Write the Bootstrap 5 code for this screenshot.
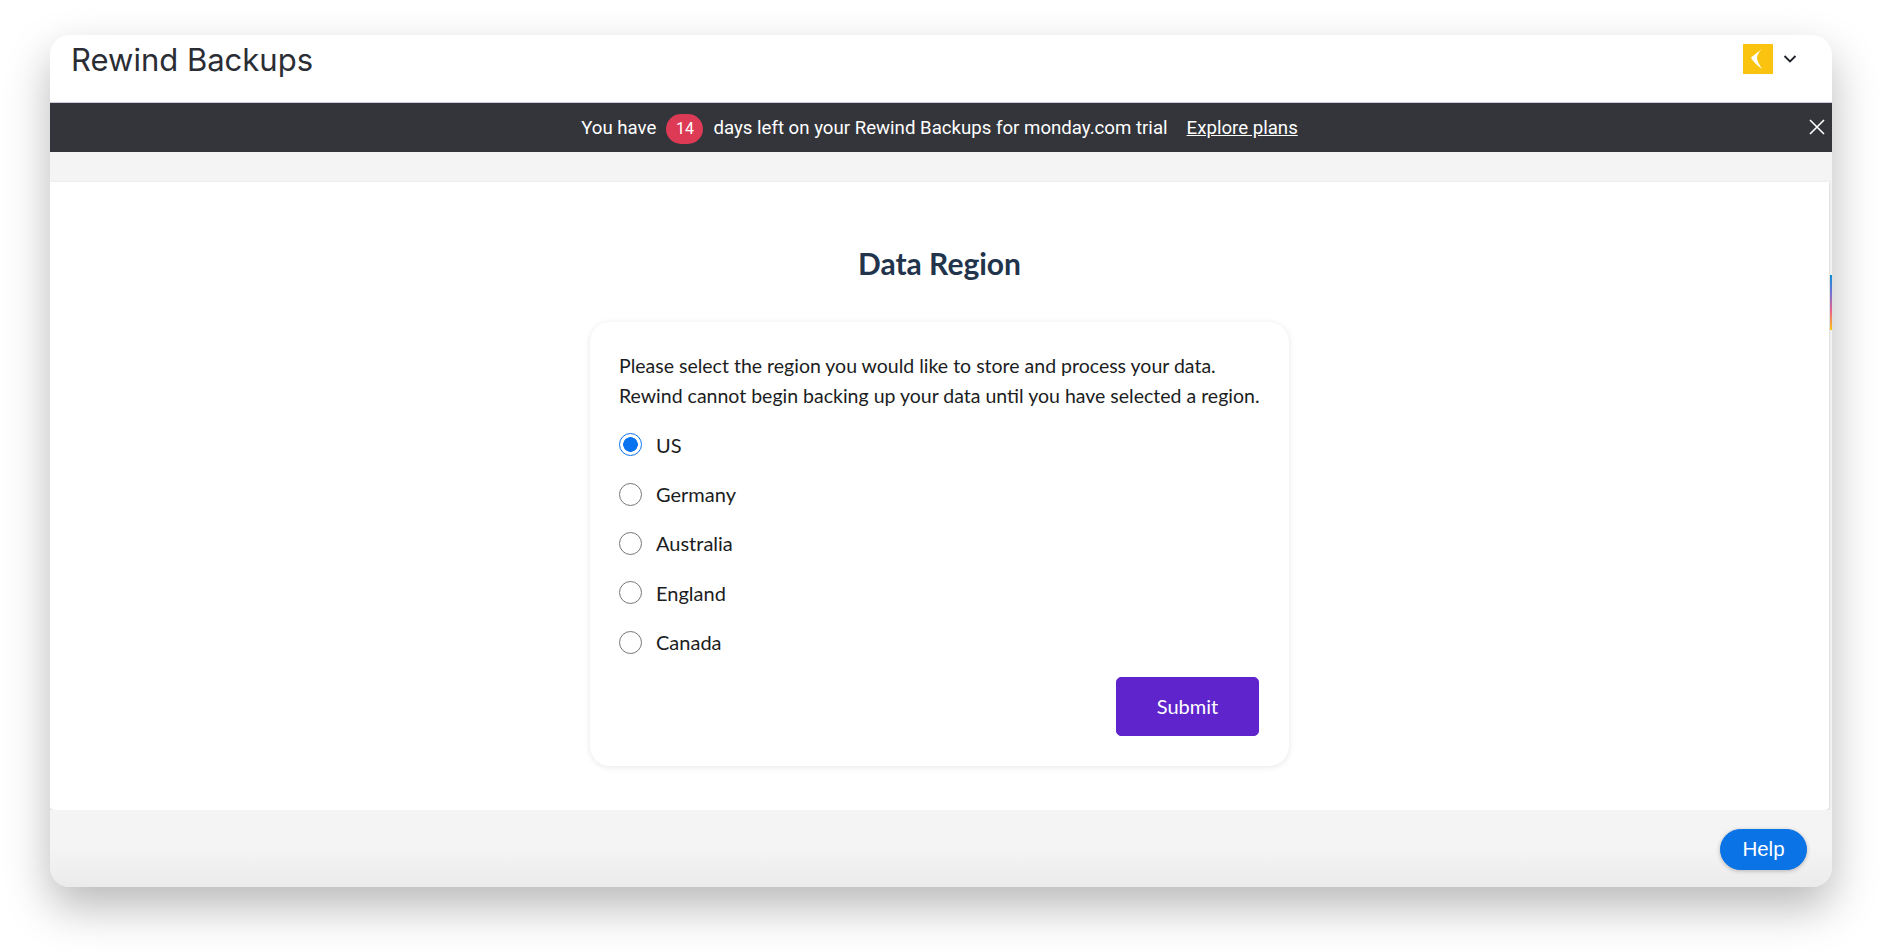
<!DOCTYPE html>
<html lang="en">
<head>
  <meta charset="UTF-8">
  <title>Rewind Backups</title>
  <meta name="viewport" content="width=device-width, initial-scale=1">
  <link href="https://cdn.jsdelivr.net/npm/bootstrap@5.3.0/dist/css/bootstrap.min.css" rel="stylesheet">
  <style>
    body { background: #fff; font-family: "Lato", sans-serif; height: 952px; overflow: hidden; padding: 35px 50px 0; }
    .app-window { height: 852px; border-radius: 20px; background: #f4f4f4; box-shadow: 0 20px 45px rgba(0,0,0,.28); overflow: hidden; position: relative; }
    .app-header { height: 67px; background: #fff; padding: 3px 31px 0 21px; }
    .app-title { font-family: "Inter", sans-serif; font-size: 31px; line-height: 44px; font-weight: 400; color: #2b2d35; margin: 0; }
    .logo-tile { width: 30px; height: 30px; background: #fac30f; }
    .header-tools { margin-top: 6px; gap: 6px; }
    .trial-bar { height: 50px; background: #33353b; border-top: 1px solid #c9cbdc; color: #fff; font-family: "Roboto", sans-serif; font-size: 18.65px; padding: 2px 3px 0 0; }
    .trial-bar a { color: #fff; margin-left: 19px; }
    .days-pill { width: 37px; height: 30px; background: #dc3a55; font-size: 16px; margin: 0 10px; }
    .bar-close { right: 6px; top: 15px; line-height: 0; }
    .gray-gap { height: 30px; }
    .main-panel { height: 628px; margin-right: 3px; background: #fff; border-radius: 0 0 4px 4px; box-shadow: 0 1px 3px rgba(0,0,0,.2); padding-top: 63px; }
    .panel-heading { font-size: 30px; line-height: 36px; font-weight: 700; color: #22344c; margin: 0 0 41px; }
    .region-box { width: 699px; height: 444px; margin-left: 540px; border-radius: 20px; box-shadow: 0 1px 6px rgba(0,0,0,.1); padding: 29px 30px 0 29px; color: #1b1d22; }
    .region-box p { font-size: 19.5px; line-height: 30px; margin: 0 0 9px; white-space: nowrap; }
    .radio-row { height: 49.4px; margin: 0; padding: 0; gap: 14px; font-size: 20px; }
    .radio-row .form-check-input { width: 23px; height: 23px; margin: 0; border: 1.5px solid #777; float: none; flex: none; }
    .radio-row .form-check-input:checked { background-color: #fff; border-color: #0a74f0; background-image: radial-gradient(circle, #0a74f0 0 7px, #fff 7.6px); }
    .btn-submit { width: 143px; height: 59px; background: #5f24cb; border-color: #5f24cb; color: #fff; font-size: 20px; border-radius: 5px; }
    .submit-row { margin-top: 10px; }
    .btn-help { right: 25px; bottom: 17px; width: 87px; height: 41px; padding: 0; background: #0a73e6; border-color: #0a73e6; color: #fff; font-family: "Liberation Sans", sans-serif; font-size: 20.5px; box-shadow: 0 1px 4px rgba(0,0,0,.25); }
    .footer-fade { height: 77px; background: linear-gradient(#f4f4f4 50%, #ebebeb); }
    .side-strip { right: 0; top: 240px; width: 2px; height: 55px; background: linear-gradient(#0a8fd8, #7a6fd0 35%, #e8608a 65%, #fac30f); }
  </style>
</head>
<body>
  <div class="app-window">
    <div class="app-header d-flex justify-content-between">
      <h1 class="app-title">Rewind Backups</h1>
      <div class="header-tools d-flex align-items-center align-self-start">
        <div class="logo-tile d-flex align-items-center justify-content-center">
          <svg width="30" height="30" viewBox="0 0 30 30"><path d="M19 5 C15 8 10 12 8 13.5 C10 18 15 22 19 25 C16 20 14 17 14 14 C14 11 16 8 19 5Z" fill="#fff"/></svg>
        </div>
        <svg class="ms-1 me-1" width="14" height="30" viewBox="0 0 14 30"><path d="M1.5 12 L7 17.5 L12.5 12" fill="none" stroke="#1f2128" stroke-width="1.8"/></svg>
      </div>
    </div>

    <div class="trial-bar d-flex align-items-center justify-content-center position-relative">
      <span>You have</span>
      <span class="days-pill rounded-pill d-flex align-items-center justify-content-center">14</span>
      <span>days left on your Rewind Backups for monday.com trial</span>
      <a href="#">Explore plans</a>
      <span class="bar-close position-absolute">
        <svg width="18" height="18" viewBox="0 0 18 18"><path d="M2 2 L16 16 M16 2 L2 16" stroke="#fff" stroke-width="1.6"/></svg>
      </span>
    </div>

    <div class="gray-gap"></div>

    <div class="main-panel">
      <h2 class="panel-heading text-center">Data Region</h2>
      <div class="region-box bg-white">
        <p>Please select the region you would like to store and process your data.<br>Rewind cannot begin backing up your data until you have selected a region.</p>
        <div class="form-check radio-row d-flex align-items-center">
          <input class="form-check-input" type="radio" name="region" id="r1" checked>
          <label for="r1">US</label>
        </div>
        <div class="form-check radio-row d-flex align-items-center">
          <input class="form-check-input" type="radio" name="region" id="r2">
          <label for="r2">Germany</label>
        </div>
        <div class="form-check radio-row d-flex align-items-center">
          <input class="form-check-input" type="radio" name="region" id="r3">
          <label for="r3">Australia</label>
        </div>
        <div class="form-check radio-row d-flex align-items-center">
          <input class="form-check-input" type="radio" name="region" id="r4">
          <label for="r4">England</label>
        </div>
        <div class="form-check radio-row d-flex align-items-center">
          <input class="form-check-input" type="radio" name="region" id="r5">
          <label for="r5">Canada</label>
        </div>
        <div class="submit-row d-flex justify-content-end">
          <button type="button" class="btn btn-submit">Submit</button>
        </div>
      </div>
    </div>

    <div class="footer-fade"></div>
    <button type="button" class="btn btn-help rounded-pill position-absolute">Help</button>
    <div class="side-strip position-absolute"></div>
  </div>
  <script src="https://cdn.jsdelivr.net/npm/bootstrap@5.3.0/dist/js/bootstrap.bundle.min.js"></script>
</body>
</html>
